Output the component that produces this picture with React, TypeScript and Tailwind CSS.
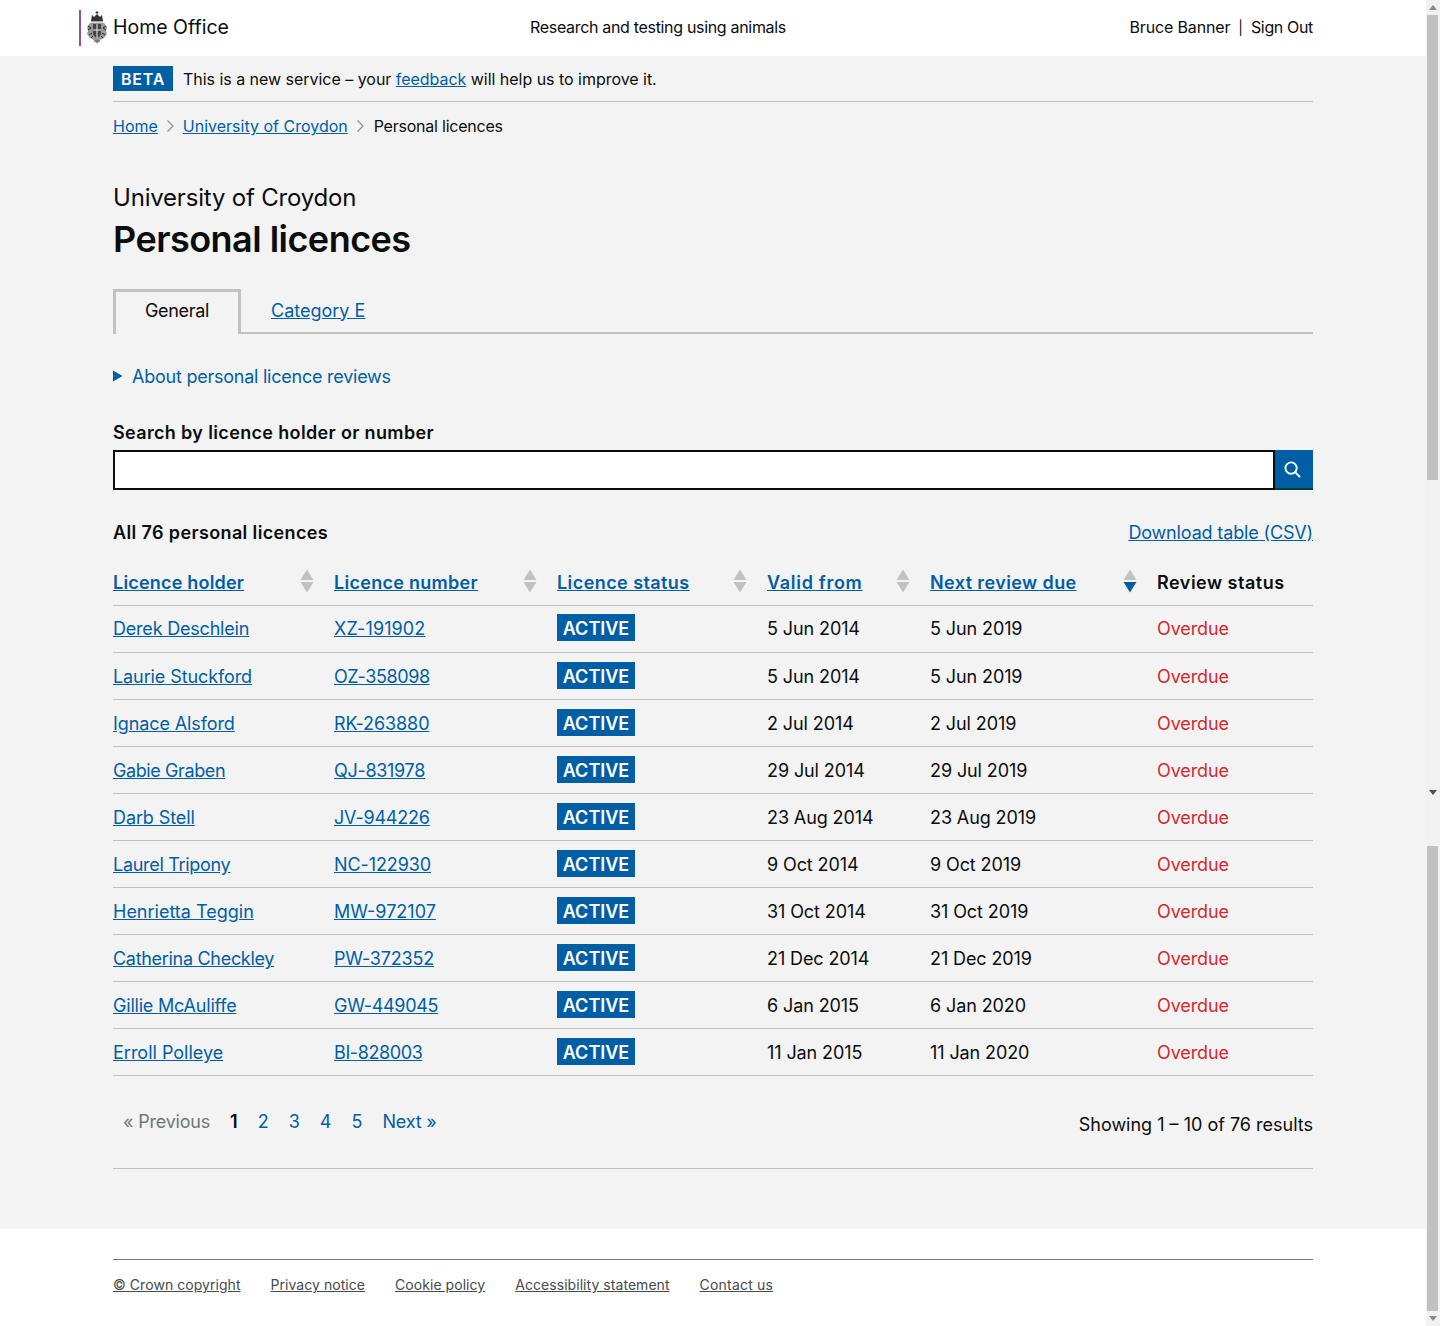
import React from "react";

const rows = [
  ["Derek Deschlein", "tracking-[-0.2px]", "XZ-191902", "tracking-[0.1px]", "5 Jun 2014", "5 Jun 2019"],
  ["Laurie Stuckford", "tracking-[-0.1px]", "OZ-358098", "tracking-[-0.4px]", "5 Jun 2014", "5 Jun 2019"],
  ["Ignace Alsford", "tracking-[-0.1px]", "RK-263880", "tracking-[-0.1px]", "2 Jul 2014", "2 Jul 2019"],
  ["Gabie Graben", "tracking-[-0.4px]", "QJ-831978", "tracking-[-0.3px]", "29 Jul 2014", "29 Jul 2019"],
  ["Darb Stell", "tracking-[-0.1px]", "JV-944226", "tracking-[-0.2px]", "23 Aug 2014", "23 Aug 2019"],
  ["Laurel Tripony", "tracking-[-0.3px]", "NC-122930", "tracking-[-0.1px]", "9 Oct 2014", "9 Oct 2019"],
  ["Henrietta Teggin", "tracking-[0px]", "MW-972107", "tracking-[0px]", "31 Oct 2014", "31 Oct 2019"],
  ["Catherina Checkley", "tracking-[-0.3px]", "PW-372352", "tracking-[-0.2px]", "21 Dec 2014", "21 Dec 2019"],
  ["Gillie McAuliffe", "tracking-[-0.2px]", "GW-449045", "tracking-[-0.3px]", "6 Jan 2015", "6 Jan 2020"],
  ["Erroll Polleye", "tracking-[0px]", "BI-828003", "tracking-[-0.4px]", "11 Jan 2015", "11 Jan 2020"],
];

function Crest() {
  return (
    <svg width="20" height="34" viewBox="0 0 20 34" className="shrink-0">
      <path d="M10 0v3M8.500 1.500h3" stroke="#333" strokeWidth="1" fill="none" />
      <path d="M5 4l2 2 3-3 3 3 2-2 1 6H4z" fill="#333" />
      <rect x="4" y="10" width="12" height="1.500" fill="#aaa" />
      <path d="M3 12h14l3 4-1 4 1 3-3 4-4 2-3 4-3-4-4-2-3-4 1-3-1-4z" fill="#999" />
      <path d="M6 13h8v9q0 3-4 5-4-2-4-5z" fill="#444" />
      <path d="M10 13v14M6 19h8" stroke="#eee" strokeWidth="1" />
      <path d="M1 15l3 2-3 2M19 15l-3 2 3 2M2 24l3-2M18 24l-3-2M4 27l2-2M16 27l-2-2" stroke="#222" strokeWidth="1" fill="none" />
      <path d="M7 30h6" stroke="#555" strokeWidth="1" />
    </svg>
  );
}

function Chevron() {
  return (
    <svg width="9" height="14" viewBox="0 0 9 14" className="mx-[8px]">
      <path d="M1.500 1.500L7 7l-5.500 5.500" fill="none" stroke="#8f8f8f" strokeWidth="1.200" />
    </svg>
  );
}

function SortIcon({ active = false }: { active?: boolean }) {
  return (
    <svg width="14" height="24" viewBox="0 0 14 24" className="shrink-0">
      <path d="M7 0.500L13.500 11H.5z" fill="#bfc1c3" />
      <path d="M7 23.500L.5 13h13z" fill={active ? "#005ea5" : "#bfc1c3"} />
    </svg>
  );
}

function Th({ label, active, track }: { label: string; active?: boolean; track: string }) {
  return (
    <th className="p-0 text-left align-top font-semibold">
      <div className="flex h-[47px] items-start pt-[13px] pr-[20px]">
        <a href="#" className={`flex-1 leading-[24px] ${track}`}>
          <span className="text-[#005ea5] underline">{label}</span>
        </a>
        <div className="-mt-[2px]">
          <SortIcon active={active} />
        </div>
      </div>
    </th>
  );
}

function Scrollbar() {
  const Up = () => (
    <svg width="8" height="5" viewBox="0 0 8 5" className="mx-auto">
      <path d="M4 0L8 5H0z" fill="#8a8a8a" />
    </svg>
  );
  const Down = ({ c }: { c: string }) => (
    <svg width="8" height="5" viewBox="0 0 8 5" className="mx-auto block">
      <path d="M4 5L0 0h8z" fill={c} />
    </svg>
  );
  return (
    <div className="flex h-[1326px] w-[14px] shrink-0 flex-col bg-[#f1f1f1]">
      <div className="h-[15px] pt-[5px]">
        <Up />
      </div>
      <div className="ml-[1px] h-[465px] w-[11px] bg-[#c1c1c1]" />
      <div className="mt-[310px] h-[5px]">
        <Down c="#505050" />
      </div>
      <div className="mt-[51px] ml-[1px] h-[465px] w-[11px] bg-[#c1c1c1]" />
      <div className="mt-[5px] h-[5px]">
        <Down c="#8a8a8a" />
      </div>
    </div>
  );
}

export default function App() {
  return (
    <div className="flex w-[1440px] overflow-hidden bg-[#f3f3f3] text-[18px] text-[#0b0c0c] [font-family:Inter,sans-serif]">
      <div className="w-[1426px]">
        <header className="h-[56px] bg-white">
          <div className="mx-auto flex h-[56px] w-[1200px] items-center text-[16px]">
            <div className="-ml-[34px] flex h-[36px] w-[451px] shrink-0 items-center border-l-2 border-[#8f4e9f] pl-[6px]">
              <Crest />
              <span className="ml-[6px] text-[19.5px]">Home Office</span>
            </div>
            <div className="mb-[2px] tracking-[-0.32px]">Research and testing using animals</div>
            <div className="mb-[2px] ml-auto flex items-center">
              <span className="tracking-[-0.15px]">Bruce Banner</span>
              <span className="mx-[8px] text-[14px]">|</span>
              <span className="tracking-[-0.35px]">Sign Out</span>
            </div>
          </div>
        </header>

        <main className="mx-auto w-[1200px]">
          <div className="flex h-[46px] items-start border-b border-[#bfc1c3] pt-[10px] text-[16px]">
            <span className="flex h-[25px] w-[60px] items-center justify-center bg-[#005ea5] font-semibold tracking-[0.8px] text-white">BETA</span>
            <span className="ml-[10px] leading-[26px] tracking-[-0.03px]">
              This is a new service – your <a href="#" className="text-[#005ea5] underline">feedback</a> will help us to improve it.
            </span>
          </div>

          <nav className="flex h-[48px] items-center text-[16px]">
            <a href="#" className="text-[#005ea5] underline">Home</a>
            <Chevron />
            <a href="#" className="text-[#005ea5] underline">University of Croydon</a>
            <Chevron />
            <span className="ml-[1px] tracking-[-0.23px]">Personal licences</span>
          </nav>

          <div className="mt-[34px] text-[24px] leading-[28px] tracking-[-0.2px]">University of Croydon</div>
          <h1 className="mt-[5px] text-[36px] font-semibold leading-[44px] tracking-[-0.53px]">Personal licences</h1>

          <div className="mt-[28px] flex h-[45px] border-b-2 border-[#bfc1c3]">
            <div className="-mb-[2px] flex h-[45px] w-[128px] items-center justify-center border-[3px] border-b-0 border-[#bfc1c3] bg-[#f3f3f3] pb-[5px] tracking-[-0.3px]">General</div>
            <a href="#" className="ml-[30px] flex items-center pb-[1px] text-[#005ea5] underline">Category E</a>
          </div>

          <div className="mt-[30px] flex h-[24px] items-center text-[#005ea5]">
            <svg width="10" height="12" viewBox="0 0 10 12">
              <path d="M0 0.500L9.500 6 0 11.500z" fill="#005ea5" />
            </svg>
            <span className="ml-[9px] tracking-[-0.24px]">About personal licence reviews</span>
          </div>

          <label className="mt-[33px] block font-semibold leading-[24px] tracking-[0.35px]">Search by licence holder or number</label>
          <div className="mt-[5px] flex h-[40px]">
            <div className="flex-1 border-2 border-[#0b0c0c] bg-white" />
            <button className="flex w-[38px] items-center justify-center border-b-2 border-[#00432a] bg-[#005ea5] pr-[3px]">
              <svg width="17" height="17" viewBox="0 0 18 18" fill="none" stroke="white">
                <circle cx="7.500" cy="7.500" r="6" strokeWidth="2" />
                <path d="M12 12l5 5" strokeWidth="2" />
              </svg>
            </button>
          </div>

          <div className="mt-[29px] flex h-[26px] items-center justify-between">
            <span className="font-semibold tracking-[0.37px]">All 76 personal licences</span>
            <a href="#" className="tracking-[-0.15px] text-[#005ea5] underline">Download table (CSV)</a>
          </div>

          <table className="mt-[13px] w-[1200px] table-fixed border-collapse">
            <colgroup>
              <col className="w-[221px]" />
              <col className="w-[223px]" />
              <col className="w-[210px]" />
              <col className="w-[163px]" />
              <col className="w-[227px]" />
              <col className="w-[156px]" />
            </colgroup>
            <thead>
              <tr className="border-b border-[#bfc1c3]">
                <Th label="Licence holder" track="tracking-[0.2px]" />
                <Th label="Licence number" track="tracking-[0.28px]" />
                <Th label="Licence status" track="tracking-[0.43px]" />
                <Th label="Valid from" track="tracking-[0.7px]" />
                <Th label="Next review due" active track="tracking-[0.4px]" />
                <th className="p-0 text-left align-top font-semibold">
                  <div className="h-[47px] pt-[13px] leading-[24px] tracking-[0.5px]">Review status</div>
                </th>
              </tr>
            </thead>
            <tbody>
              {rows.map((r, i) => {
                const text = i === 0 ? "p-0 pb-[1px]" : "p-0 pt-[1px]";
                const pill = i === 0 ? "p-0 pb-[3px]" : "p-0 pb-[1px]";
                return (
                  <tr key={r[2]} className="h-[47px] border-b border-[#bfc1c3]">
                    <td className={text}><a href="#" className={`text-[#005ea5] underline ${r[1]}`}>{r[0]}</a></td>
                    <td className={text}><a href="#" className={`text-[#005ea5] underline ${r[3]}`}>{r[2]}</a></td>
                    <td className={pill}>
                      <span className="flex h-[27px] w-[78px] items-center justify-center bg-[#005ea5] pt-[2px] font-semibold text-white">ACTIVE</span>
                    </td>
                    <td className={`${text} tracking-[-0.1px]`}>{r[4]}</td>
                    <td className={`${text} tracking-[-0.1px]`}>{r[5]}</td>
                    <td className={`${text} tracking-[-0.1px] text-[#d02a30]`}>Overdue</td>
                  </tr>
                );
              })}
            </tbody>
          </table>

          <div className="flex h-[93px] items-start justify-between border-b border-[#bfc1c3] pt-[33px]">
            <div className="flex gap-[20px] pl-[10px] leading-[26px]">
              <span className="tracking-[-0.2px] text-[#6f777b]">« Previous</span>
              <span className="font-semibold">1</span>
              <a href="#" className="text-[#005ea5]">2</a>
              <a href="#" className="text-[#005ea5]">3</a>
              <a href="#" className="text-[#005ea5]">4</a>
              <a href="#" className="text-[#005ea5]">5</a>
              <a href="#" className="tracking-[-0.2px] text-[#005ea5]">Next »</a>
            </div>
            <span className="pt-[3px] leading-[26px]">Showing 1 – 10 of 76 results</span>
          </div>
        </main>

        <footer className="mt-[60px] h-[97px] bg-white pt-[30px]">
          <div className="mx-auto flex h-[52px] w-[1200px] items-center gap-[30px] border-t border-[#6f777b] pb-[2px] text-[14px] tracking-[0.05px] text-[#454a4c]">
            <a href="#" className="underline">© Crown copyright</a>
            <a href="#" className="underline">Privacy notice</a>
            <a href="#" className="underline">Cookie policy</a>
            <a href="#" className="underline">Accessibility statement</a>
            <a href="#" className="tracking-[0.2px] underline">Contact us</a>
          </div>
        </footer>
      </div>
      <Scrollbar />
    </div>
  );
}
